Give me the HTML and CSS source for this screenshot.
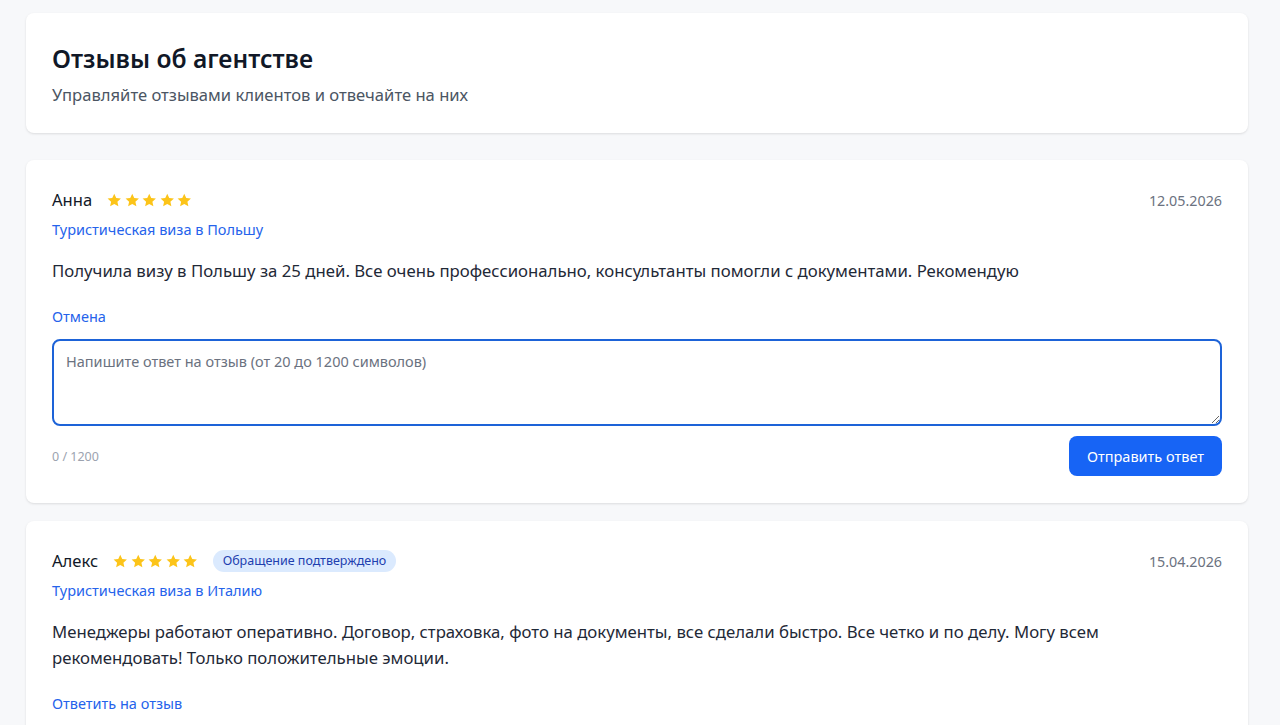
FILE: index.html
```html
<!DOCTYPE html>
<html lang="ru">
<head>
    <meta charset="UTF-8">
    <meta name="viewport" content="width=device-width, initial-scale=1.0">
    <title>Отзывы об агентстве</title>
    <link rel="stylesheet" href="styles.css">
</head>
<body>
    <div class="page">
        <div class="card head">
            <h1>Отзывы об агентстве</h1>
            <p class="lead">Управляйте отзывами клиентов и отвечайте на них</p>
        </div>

        <div class="list">
            <div class="card review">
                <div class="review-top">
                    <div class="who">
                        <span class="name">Анна</span>
                        <span class="stars">
                            <svg viewBox="0 0 24 24"><path d="M12 2.5l2.9 6.2 6.8.7-5.1 4.6 1.4 6.7L12 17.3l-6 3.4 1.4-6.7-5.1-4.6 6.8-.7z"/></svg>
                            <svg viewBox="0 0 24 24"><path d="M12 2.5l2.9 6.2 6.8.7-5.1 4.6 1.4 6.7L12 17.3l-6 3.4 1.4-6.7-5.1-4.6 6.8-.7z"/></svg>
                            <svg viewBox="0 0 24 24"><path d="M12 2.5l2.9 6.2 6.8.7-5.1 4.6 1.4 6.7L12 17.3l-6 3.4 1.4-6.7-5.1-4.6 6.8-.7z"/></svg>
                            <svg viewBox="0 0 24 24"><path d="M12 2.5l2.9 6.2 6.8.7-5.1 4.6 1.4 6.7L12 17.3l-6 3.4 1.4-6.7-5.1-4.6 6.8-.7z"/></svg>
                            <svg viewBox="0 0 24 24"><path d="M12 2.5l2.9 6.2 6.8.7-5.1 4.6 1.4 6.7L12 17.3l-6 3.4 1.4-6.7-5.1-4.6 6.8-.7z"/></svg>
                        </span>
                    </div>
                    <span class="date">12.05.2026</span>
                </div>
                <div class="service">Туристическая виза в Польшу</div>
                <p class="text">Получила визу в Польшу за 25 дней. Все очень профессионально, консультанты помогли с документами. Рекомендую</p>
                <a href="javascript:;" class="link">Отмена</a>
                <textarea class="answer" placeholder="Напишите ответ на отзыв (от 20 до 1200 символов)"></textarea>
                <div class="answer-foot">
                    <span class="count">0 / 1200</span>
                    <button class="send">Отправить ответ</button>
                </div>
            </div>

            <div class="card review">
                <div class="review-top">
                    <div class="who">
                        <span class="name">Алекс</span>
                        <span class="stars">
                            <svg viewBox="0 0 24 24"><path d="M12 2.5l2.9 6.2 6.8.7-5.1 4.6 1.4 6.7L12 17.3l-6 3.4 1.4-6.7-5.1-4.6 6.8-.7z"/></svg>
                            <svg viewBox="0 0 24 24"><path d="M12 2.5l2.9 6.2 6.8.7-5.1 4.6 1.4 6.7L12 17.3l-6 3.4 1.4-6.7-5.1-4.6 6.8-.7z"/></svg>
                            <svg viewBox="0 0 24 24"><path d="M12 2.5l2.9 6.2 6.8.7-5.1 4.6 1.4 6.7L12 17.3l-6 3.4 1.4-6.7-5.1-4.6 6.8-.7z"/></svg>
                            <svg viewBox="0 0 24 24"><path d="M12 2.5l2.9 6.2 6.8.7-5.1 4.6 1.4 6.7L12 17.3l-6 3.4 1.4-6.7-5.1-4.6 6.8-.7z"/></svg>
                            <svg viewBox="0 0 24 24"><path d="M12 2.5l2.9 6.2 6.8.7-5.1 4.6 1.4 6.7L12 17.3l-6 3.4 1.4-6.7-5.1-4.6 6.8-.7z"/></svg>
                        </span>
                        <span class="badge">Обращение подтверждено</span>
                    </div>
                    <span class="date">15.04.2026</span>
                </div>
                <div class="service">Туристическая виза в Италию</div>
                <p class="text">Менеджеры работают оперативно. Договор, страховка, фото на документы, все сделали быстро. Все четко и по делу. Могу всем рекомендовать! Только положительные эмоции.</p>
                <a href="javascript:;" class="link">Ответить на отзыв</a>
            </div>
        </div>
    </div>

    <script>
        //счётчик символов в ответе
        const answer = document.querySelector(".answer")
        const count = document.querySelector(".count")
        answer.addEventListener("input", () => {
            count.textContent = answer.value.length + " / 1200"
        })
        answer.focus()
    </script>
</body>
</html>
```

FILE: styles.css
```css
*{
    margin: 0;
    padding: 0;
    box-sizing: border-box;
}
body{
    background-color: #f7f8fa;
    font-family: "Noto Sans", sans-serif;
    color: #1f2937;
}
.page{
    padding: 13px 32px 40px 26px;
}
.list{
    margin-top: 27px;
    display: flex;
    flex-direction: column;
    gap: 18px;
}
.card{
    background-color: #fff;
    border-radius: 8px;
    box-shadow: 0 1px 3px rgba(0, 0, 0, .08), 0 1px 2px rgba(0, 0, 0, .04);
    padding: 28px 26px 26px;
}
.review{
    padding-bottom: 27px;
}
.head h1{
    font-size: 24.6px;
    line-height: 36px;
    font-weight: 600;
    color: #111827;
}
.head .lead{
    margin-top: 6px;
    font-size: 16.6px;
    line-height: 24px;
    color: #4b5563;
}
.review-top{
    display: flex;
    justify-content: space-between;
    align-items: center;
}
.who{
    display: flex;
    align-items: center;
    gap: 14px;
}
.name{
    font-size: 16.6px;
    line-height: 24px;
    color: #111827;
}
.stars{
    display: flex;
    gap: 1px;
}
.stars svg{
    width: 16.5px;
    height: 16.5px;
    fill: #fcc419;
}
.badge{
    font-size: 12.5px;
    line-height: 22px;
    padding: 0 10px;
    border-radius: 11px;
    background-color: #dbeafe;
    color: #1e40af;
}
.date{
    font-size: 14.3px;
    color: #6b7280;
}
.service{
    margin-top: 7px;
    font-size: 14.5px;
    line-height: 20px;
    color: #2563eb;
}
.text{
    margin-top: 19px;
    font-size: 16.75px;
    line-height: 26px;
    color: #1f2937;
}
.link{
    display: inline-block;
    margin-top: 22px;
    font-size: 14.5px;
    line-height: 20px;
    color: #2563eb;
    text-decoration: none;
}
.answer{
    display: block;
    width: 100%;
    height: 87px;
    margin-top: 12px;
    padding: 10px 12px;
    border: 2px solid #1d63d8;
    border-radius: 8px;
    outline: none;
    font-family: inherit;
    font-size: 14.5px;
    line-height: 20px;
    color: #1f2937;
}
.answer::placeholder{
    color: #6b7280;
}
.answer-foot{
    margin-top: 10px;
    display: flex;
    justify-content: space-between;
    align-items: center;
}
.count{
    font-size: 12.5px;
    color: #9ca3af;
}
.send{
    height: 40px;
    padding: 0 18px;
    border: none;
    border-radius: 8px;
    background-color: #1764f5;
    color: #fff;
    font-family: inherit;
    font-size: 14.5px;
    cursor: pointer;
}
```
